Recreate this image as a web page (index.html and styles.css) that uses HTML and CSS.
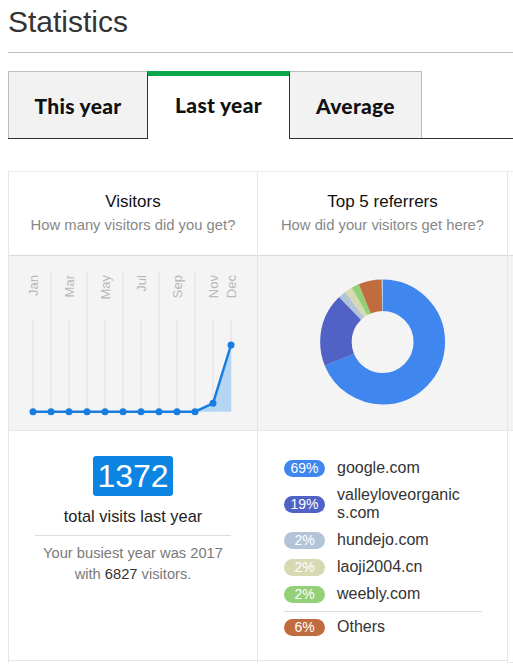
FILE: index.html
```html
<!DOCTYPE html>
<html lang="en">
<head>
<meta charset="utf-8">
<title>Statistics</title>
<link rel="stylesheet" href="styles.css">
</head>
<body>
<div class="page">
  <h1 class="title">Statistics</h1>

  <div class="tabs">
    <div class="tab">This year</div>
    <div class="tab active">Last year</div>
    <div class="tab">Average</div>
  </div>

  <div class="panel">
    <section class="col">
      <header class="head">
        <div class="head-title">Visitors</div>
        <div class="head-sub">How many visitors did you get?</div>
      </header>
      <div class="chart">
        <svg class="chart-svg" width="248" height="174" viewBox="0 0 248 174">
          <g class="grid">
            <line x1="24" y1="64" x2="24" y2="156"/>
            <line x1="42" y1="16" x2="42" y2="156"/>
            <line x1="60" y1="64" x2="60" y2="156"/>
            <line x1="78" y1="16" x2="78" y2="156"/>
            <line x1="96" y1="64" x2="96" y2="156"/>
            <line x1="114" y1="16" x2="114" y2="156"/>
            <line x1="132" y1="64" x2="132" y2="156"/>
            <line x1="150" y1="16" x2="150" y2="156"/>
            <line x1="168" y1="64" x2="168" y2="156"/>
            <line x1="186" y1="16" x2="186" y2="156"/>
            <line x1="204" y1="64" x2="204" y2="156"/>
            <line x1="222" y1="64" x2="222" y2="156"/>
          </g>
          <g class="months">
            <text x="28.5" y="19" transform="rotate(-90 28.5 19)">Jan</text>
            <text x="64.5" y="19" transform="rotate(-90 64.5 19)">Mar</text>
            <text x="100.5" y="19" transform="rotate(-90 100.5 19)">May</text>
            <text x="136.5" y="19" transform="rotate(-90 136.5 19)">Jul</text>
            <text x="172.5" y="19" transform="rotate(-90 172.5 19)">Sep</text>
            <text x="208.5" y="19" transform="rotate(-90 208.5 19)">Nov</text>
            <text x="226.5" y="19" transform="rotate(-90 226.5 19)">Dec</text>
          </g>
          <polygon class="area" points="186,155.7 204,147.3 222,89 222,155.7"/>
          <polyline class="line" points="24,155.7 42,155.7 60,155.7 78,155.7 96,155.7 114,155.7 132,155.7 150,155.7 168,155.7 186,155.7 204,147.3 222,89"/>
          <g class="dots">
            <circle cx="24" cy="155.7" r="3.5"/>
            <circle cx="42" cy="155.7" r="3.5"/>
            <circle cx="60" cy="155.7" r="3.5"/>
            <circle cx="78" cy="155.7" r="3.5"/>
            <circle cx="96" cy="155.7" r="3.5"/>
            <circle cx="114" cy="155.7" r="3.5"/>
            <circle cx="132" cy="155.7" r="3.5"/>
            <circle cx="150" cy="155.7" r="3.5"/>
            <circle cx="168" cy="155.7" r="3.5"/>
            <circle cx="186" cy="155.7" r="3.5"/>
            <circle cx="204" cy="147.3" r="3.5"/>
            <circle cx="222" cy="89" r="3.5"/>
          </g>
        </svg>
      </div>
      <div class="foot foot-visits">
        <div class="total">1372</div>
        <div class="total-label">total visits last year</div>
        <div class="busiest">Your busiest year was 2017<br>with <span class="strong">6827</span> visitors.</div>
      </div>
    </section>

    <section class="col">
      <header class="head">
        <div class="head-title">Top 5 referrers</div>
        <div class="head-sub">How did your visitors get here?</div>
      </header>
      <div class="chart">
        <svg class="chart-svg" width="249" height="174" viewBox="0 0 249 174">
          <g transform="rotate(-90 124.6 86)" fill="none" stroke-width="31.5">
            <circle cx="124.6" cy="86" r="46.7" stroke="#3f86ee" stroke-dasharray="201.6 400" stroke-dashoffset="0"/>
            <circle cx="124.6" cy="86" r="46.7" stroke="#5162c6" stroke-dasharray="55.5 400" stroke-dashoffset="-201.6"/>
            <circle cx="124.6" cy="86" r="46.7" stroke="#b4c4d8" stroke-dasharray="5.85 400" stroke-dashoffset="-257.1"/>
            <circle cx="124.6" cy="86" r="46.7" stroke="#d6d9b2" stroke-dasharray="5.85 400" stroke-dashoffset="-262.95"/>
            <circle cx="124.6" cy="86" r="46.7" stroke="#93d077" stroke-dasharray="5.85 400" stroke-dashoffset="-268.8"/>
            <circle cx="124.6" cy="86" r="46.7" stroke="#c06c3e" stroke-dasharray="17.6 400" stroke-dashoffset="-274.65"/>
          </g>
        </svg>
      </div>
      <div class="foot foot-refs">
        <ul class="refs">
          <li class="ref"><span class="pill p-google">69%</span><span class="ref-name">google.com</span></li>
          <li class="ref"><span class="pill p-valley">19%</span><span class="ref-name">valleyloveorganics.com</span></li>
          <li class="ref"><span class="pill p-hundejo">2%</span><span class="ref-name">hundejo.com</span></li>
          <li class="ref"><span class="pill p-laoji">2%</span><span class="ref-name">laoji2004.cn</span></li>
          <li class="ref"><span class="pill p-weebly">2%</span><span class="ref-name">weebly.com</span></li>
          <li class="ref ref-others"><span class="pill p-others">6%</span><span class="ref-name">Others</span></li>
        </ul>
      </div>
    </section>

    <section class="col">
      <header class="head"></header>
      <div class="chart"></div>
      <div class="foot"></div>
    </section>
  </div>
</div>
</body>
</html>
```

FILE: styles.css
```css
html, body {
  margin: 0;
  padding: 0;
  overflow: hidden;
  background: #fff;
}

body {
  font-family: "Liberation Sans", Arial, sans-serif;
  color: #333;
}

.page {
  width: 760px;
  padding: 0 8px;
}

.title {
  margin: 0;
  font-size: 30px;
  font-weight: normal;
  line-height: 44px;
  color: #333;
  padding-bottom: 8px;
  border-bottom: 1px solid #bdbdbd;
}

.tabs {
  display: flex;
  margin-top: 18px;
  border-bottom: 1px solid #333;
  height: 67px;
}

.tab {
  box-sizing: border-box;
  height: 67px;
  display: flex;
  align-items: center;
  justify-content: center;
  background: #f2f2f2;
  border: 1px solid #bdbdbd;
  border-bottom: none;
  font-family: Lato, "Open Sans", sans-serif;
  font-weight: 900;
  font-size: 21px;
  letter-spacing: 0.3px;
  color: #111;
  position: relative;
}

.tab:nth-child(1) { width: 140px; }
.tab:nth-child(2) { width: 143px; margin-left: -1px; }
.tab:nth-child(3) { width: 133px; margin-left: -1px; }

.tab.active {
  background: #fff;
  height: 68px;
  border-top: 5px solid #0aa64a;
  border-left-color: #333;
  border-right-color: #333;
  padding-bottom: 6px;
  z-index: 1;
}

.panel {
  margin-top: 32px;
  display: grid;
  grid-template-columns: 249px 250px 250px;
  border-top: 1px solid #ececec;
}

.col {
  border-left: 1px solid #e6e6e6;
  display: flex;
  flex-direction: column;
}

.head {
  height: 83px;
  box-sizing: border-box;
  padding-top: 19px;
  text-align: center;
  background: #fff;
}

.head-title {
  font-size: 17px;
  line-height: 22px;
  color: #111;
}

.head-sub {
  font-size: 14.8px;
  line-height: 24px;
  color: #888;
}

.chart {
  height: 174px;
  background: #f4f4f4;
  border-top: 1px solid #dadada;
}

.chart-svg {
  display: block;
}

.grid line {
  stroke: #dedede;
  stroke-width: 1;
}

.months text {
  font-family: "Liberation Sans", Arial, sans-serif;
  font-size: 13px;
  fill: #b9b9b9;
  text-anchor: end;
}

.area {
  fill: #b5d6f3;
}

.line {
  fill: none;
  stroke: #177ddf;
  stroke-width: 2.5;
  stroke-linejoin: round;
}

.dots circle {
  fill: #177ddf;
}

.foot {
  height: 231px;
  border-top: 1px solid #e6e6e6;
  border-bottom: 1px solid #e6e6e6;
  background: #fff;
}

.foot-visits {
  box-sizing: border-box;
  padding-top: 25px;
  text-align: center;
}

.total {
  display: inline-block;
  background: #0b84e2;
  color: #fff;
  font-size: 32px;
  line-height: 40px;
  width: 80px;
  border-radius: 3px;
}

.total-label {
  margin-top: 9px;
  font-size: 16.4px;
  line-height: 22px;
  color: #222;
  padding-bottom: 8px;
  border-bottom: 1px solid #dcdcdc;
  margin-left: 26px;
  margin-right: 26px;
}

.busiest {
  margin-top: 7px;
  font-size: 14.7px;
  line-height: 21px;
  color: #7a7a7a;
}

.strong {
  color: #333;
}

.foot-refs {
  box-sizing: border-box;
  padding: 28px 0 0 26px;
}

.refs {
  list-style: none;
  margin: 0;
  padding: 0;
  width: 198px;
  display: flex;
  flex-direction: column;
  gap: 9px;
}

.ref {
  display: flex;
  align-items: center;
}

.pill {
  flex: none;
  width: 41px;
  height: 17px;
  line-height: 17px;
  border-radius: 9px;
  color: #fff;
  font-size: 14px;
  text-align: center;
}

.ref-name {
  margin-left: 12px;
  width: 126px;
  font-size: 16px;
  line-height: 18px;
  color: #333;
  word-break: break-all;
}

.ref-others {
  border-top: 1px solid #dcdcdc;
  padding-top: 6px;
  margin-top: -1px;
}

.p-google { background: #3f86ee; }
.p-valley { background: #5162c6; }
.p-hundejo { background: #b4c4d8; }
.p-laoji { background: #d6d9b2; }
.p-weebly { background: #93d077; }
.p-others { background: #c06c3e; }
```
